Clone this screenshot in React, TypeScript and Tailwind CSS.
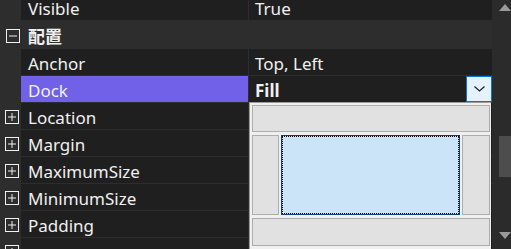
const font = { fontFamily: '"Noto Sans", "Noto Sans CJK JP", sans-serif' };

function Box({ minus }: { minus?: boolean }) {
  return (
    <svg width="14" height="14" viewBox="0 0 14 14" className="shrink-0">
      <rect x="0.5" y="0.5" width="13" height="13" fill="none" stroke="#f0f0f0" />
      <line x1="3" y1="7" x2="11" y2="7" stroke="#f0f0f0" />
      {!minus && <line x1="7" y1="3" x2="7" y2="11" stroke="#f0f0f0" />}
    </svg>
  );
}

function Row({
  name,
  value,
  expand,
  selected,
  bold,
  children,
}: {
  name?: string;
  value?: string;
  expand?: boolean;
  selected?: boolean;
  bold?: boolean;
  children?: React.ReactNode;
}) {
  return (
    <div className="flex h-[27px] border-b border-[#2d2d2d]">
      <div className="flex w-[21px] shrink-0 items-center justify-center pl-[5px] pr-[2px] pt-[1px]">
        {expand && <Box />}
      </div>
      <div
        className={`flex w-[227px] shrink-0 items-center pl-[7px] pt-[3px] ${
          selected ? "bg-[#7160e8]" : "bg-[#1f1f1f]"
        }`}
      >
        {name}
      </div>
      <div className="w-px shrink-0 bg-[#2d2d2d]" />
      <div className={`flex flex-1 items-center bg-[#1f1f1f] pl-[6px] ${bold ? "font-bold" : ""}`}>
        <span className="flex-1 pt-[3px]">{value}</span>
        {children}
      </div>
    </div>
  );
}

export default function App() {
  return (
    <div
      className="flex h-[249px] w-[511px] overflow-hidden bg-[#2d2d2d] text-[17px] leading-[20px] text-[#f0f0f0]"
      style={font}
    >
      <div className="relative w-[492px] shrink-0">
        <div className="-mt-[6px] flex flex-col">
          <Row name="Visible" value="True" />
          <div className="flex h-[28px] items-center gap-[8px] pl-[6px] pt-[2px] font-bold">
            <Box minus />
            <span className="pt-[1px]">配置</span>
          </div>
          <Row name="Anchor" value="Top, Left" />
          <Row name="Dock" value="Fill" selected bold>
            <div className="flex h-[26px] w-[26px] items-center justify-center border border-[#0078d7] bg-[#e5f1fb]">
              <svg width="11" height="6" viewBox="0 0 11 6">
                <polyline points="0.5,0.5 5.5,5 10.5,0.5" fill="none" stroke="#1f1f1f" strokeWidth="1.2" />
              </svg>
            </div>
          </Row>
          <Row name="Location" expand />
          <Row name="Margin" expand />
          <Row name="MaximumSize" expand />
          <Row name="MinimumSize" expand />
          <Row name="Padding" expand />
          <Row expand />
        </div>

        <div className="absolute left-[249px] top-[102px] flex w-[242px] flex-col gap-[3px] border-l border-t border-[#9a9a9a] bg-[#f0f0f0] p-[2px] pr-[1px]">
          <div className="h-[27px] border border-[#adadad] bg-[#e1e1e1]" />
          <div className="flex h-[80px] gap-[2px]">
            <div className="w-[27px] border border-[#adadad] bg-[#e1e1e1]" />
            <div className="flex-1 border border-[#0b3f72] bg-[#cce4f7]">
              <div className="h-full w-full border border-dotted border-black" />
            </div>
            <div className="w-[28px] border border-[#adadad] bg-[#e1e1e1]" />
          </div>
          <div className="h-[28px] border border-[#adadad] bg-[#e1e1e1]" />
          <div className="h-[28px] border border-[#adadad] bg-[#e1e1e1]" />
        </div>
      </div>

      <div className="relative w-[26px] shrink-0 bg-[#2b2b2b]">
        <div className="absolute left-[7px] top-[4px] h-0 w-0 border-x-[6px] border-b-[7px] border-x-transparent border-b-[#9a9a9a]" />
        <div className="absolute left-[7px] top-[136px] h-[41px] w-[14px] bg-[#4d4d4d]" />
        <div className="absolute left-[7px] top-[232px] h-0 w-0 border-x-[6px] border-t-[7px] border-x-transparent border-t-[#9a9a9a]" />
      </div>
    </div>
  );
}
